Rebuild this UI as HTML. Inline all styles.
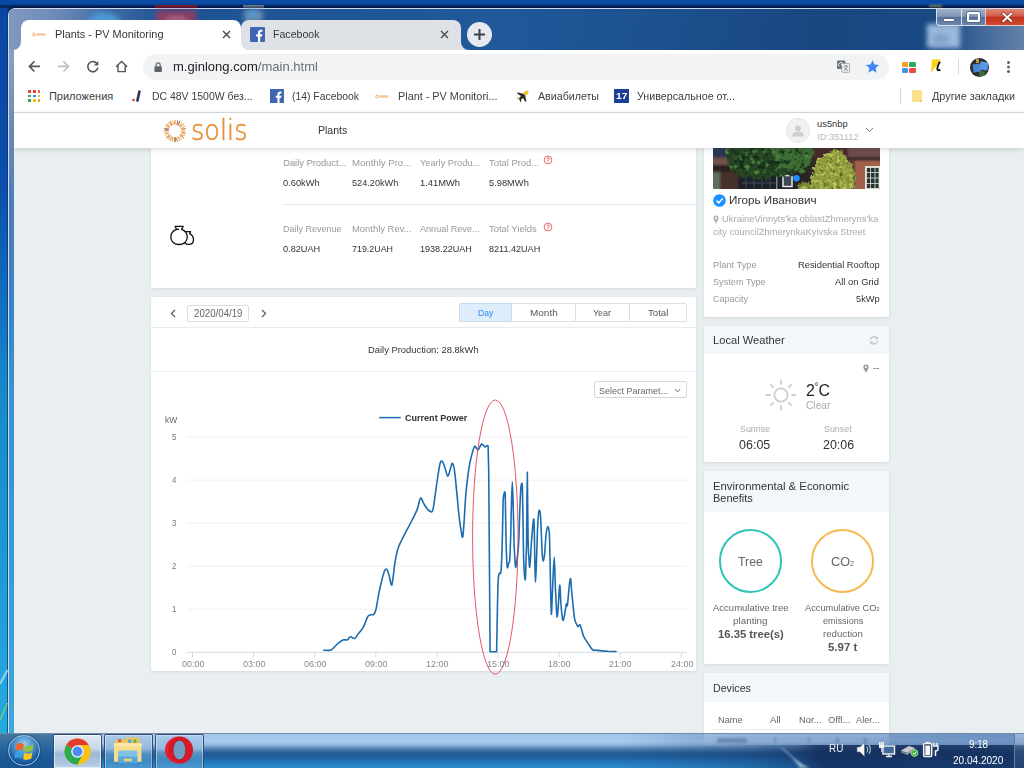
<!DOCTYPE html>
<html><head><meta charset="utf-8"><title>Plants - PV Monitoring</title>
<style>
*{box-sizing:border-box;margin:0;padding:0}
html,body{width:1024px;height:768px;overflow:hidden;background:#0b4aa2;font-family:"Liberation Sans",sans-serif}
.a{position:absolute}
.t{position:absolute;white-space:nowrap;line-height:1;transform-origin:0 0}
svg{position:absolute;overflow:visible}
#desk{left:0;top:0;width:1024px;height:768px;background:linear-gradient(180deg,#0a4ba6 0,#0a49a2 4px,#072f70 5.5px,#06295f 8px,#0a4ba6 9px)}
#deskL{left:0;top:8px;width:8.3px;height:725px;background:linear-gradient(180deg,#0a47a2 0,#0b4eac 175px,#1070c0 295px,#1688cc 375px,#1c9ad6 555px,#24aade 725px);border-right:1px solid rgba(16,50,100,.7)}
#win{left:8px;top:8px;width:1030px;height:730px;border-radius:7px 0 0 0;background:linear-gradient(100deg,#1d5190 0,#20589a 480px,#1d5291 620px,#184780 800px,#1a4a84 920px,#1c4f8c 1030px);border:1px solid #cfdcee;box-shadow:0 0 3px 1px rgba(0,10,40,.85)}
#glassL{left:9px;top:9px;width:160px;height:41px;background:linear-gradient(90deg,#8098c0 0,#6f8cb9 45px,#3f6aa3 100px,rgba(28,79,140,0) 160px);border-radius:6px 0 0 0}
#frameL{left:9px;top:50px;width:5px;height:683px;background:linear-gradient(180deg,#8a9fc2 0,#7690ba 60px,#4f7db8 150px,#3a84c6 260px,#3a92d0 340px,#3a9ad6 520px,#40a6de 683px)}
.blob{position:absolute;filter:blur(2.5px)}
.tab{position:absolute;top:20px;height:30px;border-radius:8px 8px 0 0}
#tab1{left:21px;width:220px;background:#fff}
#tab2{left:241px;width:220px;background:#dee1e6}
#newtab{left:467px;top:22px;width:25px;height:25px;border-radius:50%;background:#e6e9ee}
#chrome{left:14px;top:50px;width:1010px;height:63px;background:#fff}
#omni{left:143px;top:54px;width:746px;height:26px;border-radius:13px;background:#f1f3f4}
#bmline{left:14px;top:112px;width:1010px;height:1px;background:#dadce0}
#page{left:14px;top:113px;width:1010px;height:620px;background:#e9eef1;overflow:hidden}
.card{position:absolute;background:#fff;border-radius:2px;box-shadow:0 1px 3px rgba(100,115,125,.16)}
.chead{position:absolute;left:0;top:0;width:100%;background:#f4f7fa;border-radius:2px 2px 0 0}
.hl{position:absolute;height:1px;background:#e9ecef}
#hdr{left:0;top:0;width:1010px;height:35.2px;background:#fff;box-shadow:0 1px 5px rgba(60,70,70,.22)}
#task{left:0;top:733px;width:1024px;height:35px}
</style></head><body>

<div id="desk" class="a"></div>
<div class="a" style="left:155px;top:4.5px;width:41.5px;height:40px;background:#a3182e;filter:blur(.6px);opacity:.92"></div>
<div class="a" style="left:243px;top:5px;width:21px;height:40px;background:#8f9496;filter:blur(.6px);opacity:.85"></div>
<div class="a" style="left:929px;top:5px;width:13px;height:3px;background:#b9c27a;filter:blur(1px);opacity:.7"></div>
<div id="win" class="a"></div>
<div id="deskL" class="a"></div>
<svg style="left:0;top:660px" width="8" height="74" viewBox="0 0 8 74"><path d="M0 24 L7.500 10" stroke="#bfe4f4" stroke-width="2.200" opacity=".7"/><path d="M0 60 L7.500 43" stroke="#9fd85a" stroke-width="1.300" opacity=".8"/></svg>
<div id="glassL" class="a"></div><div id="frameL" class="a"></div>
<div class="blob" style="left:86px;top:12px;width:36px;height:30px;background:#4aa0dc;border-radius:50%;opacity:.85"></div>
<div class="blob" style="left:156px;top:10px;width:40px;height:40px;background:#a23a5a;opacity:.8"></div>
<div class="blob" style="left:166px;top:17px;width:21px;height:21px;border:3px solid #d78aa0;border-radius:6px;opacity:.8"></div>
<div class="blob" style="left:244px;top:10px;width:19px;height:12px;background:#6f8fb3;opacity:.9"></div><div class="blob" style="left:249px;top:10px;width:8px;height:8px;background:#4aa8e0;border-radius:50%;opacity:.8"></div>
<div class="a" style="left:940px;top:9px;width:90px;height:41px;background:linear-gradient(90deg,rgba(110,136,172,0) 0,rgba(110,136,172,.55) 50px,rgba(118,142,176,.85) 90px)"></div>
<div class="blob" style="left:927px;top:24px;width:33px;height:24px;background:#a9c5e6;opacity:.9"></div>
<div class="blob" style="left:933px;top:33px;width:16px;height:12px;background:#7d9cc4;opacity:.8;border-radius:50%"></div>
<!-- caption buttons -->
<div class="a" style="left:936px;top:9px;width:26px;height:17px;border:1px solid #d6e2f0;border-top:0;border-radius:0 0 0 4px;background:linear-gradient(180deg,#a1b1c9 0,#8296b3 46%,#58709a 52%,#6c86ad 100%)"></div>
<div class="a" style="left:961px;top:9px;width:25px;height:17px;border:1px solid #d6e2f0;border-top:0;background:linear-gradient(180deg,#a1b1c9 0,#8296b3 46%,#58709a 52%,#6c86ad 100%)"></div>
<div class="a" style="left:985px;top:9px;width:45px;height:17px;border:1px solid #e6c9c4;border-top:0;background:linear-gradient(180deg,#e08a7a 0,#d25a48 45%,#c0301c 50%,#cf4a30 100%)"></div>
<div class="a" style="left:943px;top:18px;width:12px;height:4px;background:#fff;border:1px solid #5a6b85;border-radius:1px"></div>
<div class="a" style="left:967px;top:12px;width:13px;height:10px;border:2.5px solid #fff;outline:1px solid #5a6b85;border-radius:1px"></div>
<svg style="left:1002.2px;top:12.8px" width="10.5" height="8.8" viewBox="0 0 12 10"><path d="M1.5 .8 L10.5 9.2 M10.5 .8 L1.5 9.2" stroke="#6a2a22" stroke-width="3.6" stroke-linecap="square"/><path d="M1.5 .8 L10.5 9.2 M10.5 .8 L1.5 9.2" stroke="#fff" stroke-width="2.2" stroke-linecap="square"/></svg>
<!-- tabs -->
<div id="tab2" class="tab"></div>
<div id="tab1" class="tab"></div>
<svg style="left:13px;top:42px" width="8" height="8"><path d="M0 8 A8 8 0 0 0 8 0 V8 Z" fill="#fff"/></svg>
<svg style="left:241px;top:42px" width="8" height="8"><path d="M8 8 A8 8 0 0 1 0 0 V8 Z" fill="#fff"/></svg>
<svg style="left:461px;top:42px" width="8" height="8"><path d="M8 8 A8 8 0 0 1 0 0 V8 Z" fill="#dee1e6"/></svg>
<div id="newtab" class="a"></div>
<svg style="left:473px;top:28px" width="13" height="13"><path d="M6.5 1 V12 M1 6.5 H12" stroke="#3c4043" stroke-width="2"/></svg>
<svg style="left:221.5px;top:30px" width="9" height="9"><path d="M1 1 L8 8 M8 1 L1 8" stroke="#45494d" stroke-width="1.4"/></svg>
<svg style="left:439.5px;top:30px" width="9" height="9"><path d="M1 1 L8 8 M8 1 L1 8" stroke="#45494d" stroke-width="1.4"/></svg>
<!-- tab favicons -->
<svg style="left:32px;top:32px" width="14" height="5" viewBox="0 0 14 5"><circle cx="2" cy="2.5" r="1.4" fill="none" stroke="#f0b070" stroke-width="1"/><rect x="4.5" y="1.3" width="9" height="2.4" rx="1" fill="#f5c99a"/></svg>
<div class="a" style="left:250px;top:27px;width:15px;height:15px;background:#4267b2;border-radius:1px"></div>
<svg style="left:250px;top:27px" width="15" height="15" viewBox="0 0 15 15"><path d="M10.2 15 V9.4 H12 L12.3 7.2 H10.2 V5.9 C10.2 5.2 10.4 4.8 11.3 4.8 H12.4 V2.9 C12.2 2.9 11.5 2.8 10.8 2.8 C9.1 2.8 8 3.8 8 5.6 V7.2 H6.2 V9.4 H8 V15 Z" fill="#fff"/></svg>
<div id="chrome" class="a"></div>
<div id="omni" class="a"></div>
<div id="bmline" class="a"></div>
<!-- toolbar icons -->
<svg style="left:27.6px;top:60.3px" width="12.8" height="12.8" viewBox="0 0 14 14"><path d="M13 7 H2 M7 1.5 L1.5 7 L7 12.5" fill="none" stroke="#50555a" stroke-width="1.7"/></svg>
<svg style="left:56.6px;top:60.3px" width="12.8" height="12.8" viewBox="0 0 14 14"><path d="M1 7 H12 M7 1.5 L12.5 7 L7 12.5" fill="none" stroke="#bbbfc4" stroke-width="1.7"/></svg>
<svg style="left:85.8px;top:60.2px" width="13.6" height="13.6" viewBox="0 0 15 15"><path d="M12.3 4.3 A5.6 5.6 0 1 0 13.1 8.5" fill="none" stroke="#50555a" stroke-width="1.7"/><path d="M13.6 1.2 V6.2 H8.6 Z" fill="#50555a"/></svg>
<svg style="left:114.9px;top:60.3px" width="13.2" height="13.2" viewBox="0 0 15 15"><path d="M1.2 7.6 L7.5 1.6 L13.8 7.6 M3.4 6.6 V13.2 H11.6 V6.6" fill="none" stroke="#50555a" stroke-width="1.6"/></svg>
<svg style="left:154.2px;top:62px" width="8.3" height="10" viewBox="0 0 10 12"><rect x="0.5" y="5" width="9" height="7" rx="1" fill="#5f6368"/><path d="M2.6 5 V3.4 A2.4 2.4 0 0 1 7.4 3.4 V5" fill="none" stroke="#5f6368" stroke-width="1.4"/></svg>
<!-- translate + star -->
<svg style="left:836.8px;top:60.4px" width="13" height="12.8" viewBox="0 0 15 15" preserveAspectRatio="none"><rect x="0" y="0.5" width="9.5" height="10" rx="1" fill="#6b7075"/><rect x="5.5" y="4" width="9" height="10.5" rx="1" fill="#eceef0" stroke="#8a8f94" stroke-width=".8"/><path d="M2.3 7.6 A2.4 2.4 0 1 1 6.6 4 M4.6 5.6 H7" stroke="#fff" stroke-width="1.1" fill="none"/><path d="M8 7 H12.5 M10.2 6 V7 M11.8 7 C11.4 9.6 9.6 11.6 8 12.2 M8.8 8.6 C9.6 10.4 11 11.8 12.6 12.4" stroke="#5f6368" stroke-width=".8" fill="none"/></svg>
<svg style="left:865px;top:58.8px" width="15" height="15" viewBox="0 0 24 24"><path d="M12 1.8 L15.1 8.6 L22.5 9.4 L17 14.4 L18.5 21.8 L12 18 L5.5 21.8 L7 14.4 L1.5 9.4 L8.9 8.6 Z" fill="#4285f4"/></svg>
<!-- extension icons -->
<div class="a" style="left:902px;top:61.8px;width:6.4px;height:5px;background:#f39c1f;border-radius:1.3px"></div>
<div class="a" style="left:909.4px;top:61.8px;width:6.4px;height:5px;background:#2eab5a;border-radius:1.3px"></div>
<div class="a" style="left:902px;top:67.8px;width:6.4px;height:5px;background:#3a97e0;border-radius:1.3px"></div>
<div class="a" style="left:909.4px;top:67.8px;width:6.4px;height:5px;background:#ea4c40;border-radius:1.3px"></div>
<svg style="left:929px;top:58px" width="14" height="16" viewBox="929 58 14 16"><path d="M931.8 59.6 L941 59.2 L936.5 66 L931 72.8 Z" fill="#fbd21e"/><path d="M939.9 61.6 C938.3 64.5 936.3 69.4 938 70 C938.8 70.3 939.6 70.2 940.4 69.8" fill="none" stroke="#111" stroke-width="1.9"/></svg>
<div class="a" style="left:958px;top:59px;width:1px;height:16px;background:#d5d8dc"></div>
<div class="a" style="left:970px;top:57.5px;width:19px;height:19px;border-radius:50%;background:#2b2f2a;overflow:hidden"><div class="a" style="left:3px;top:6px;width:8px;height:8px;background:#4a86d8;transform:rotate(-8deg)"></div><div class="a" style="left:10px;top:4px;width:8px;height:8px;background:#5a96e4;transform:rotate(10deg)"></div><div class="a" style="left:6px;top:1px;width:3px;height:4px;background:#b39a4a"></div><div class="a" style="left:9px;top:13px;width:6px;height:5px;background:#3d6a3a"></div></div>
<div class="a" style="left:1007px;top:61px;width:3px;height:3px;border-radius:50%;background:#5f6368;box-shadow:0 4.5px 0 #5f6368,0 9px 0 #5f6368"></div>
<div class="a" style="left:28.2px;top:90.0px;width:2.8px;height:2.8px;background:#e94235"></div><div class="a" style="left:32.9px;top:90.0px;width:2.8px;height:2.8px;background:#e94235"></div><div class="a" style="left:37.6px;top:90.0px;width:2.8px;height:2.8px;background:#ea5a3a"></div><div class="a" style="left:28.2px;top:94.7px;width:2.8px;height:2.8px;background:#34a853"></div><div class="a" style="left:32.9px;top:94.7px;width:2.8px;height:2.8px;background:#4285f4"></div><div class="a" style="left:37.6px;top:94.7px;width:2.8px;height:2.8px;background:#fbbc05"></div><div class="a" style="left:28.2px;top:99.4px;width:2.8px;height:2.8px;background:#34a853"></div><div class="a" style="left:32.9px;top:99.4px;width:2.8px;height:2.8px;background:#fbbc05"></div><div class="a" style="left:37.6px;top:99.4px;width:2.8px;height:2.8px;background:#f5a623"></div>
<svg style="left:131px;top:90px" width="10" height="12" viewBox="0 0 10 12"><circle cx="2.6" cy="10" r="1.3" fill="#e8283c"/><path d="M6.4 10.6 L8.4 1.6" stroke="#2b3a5c" stroke-width="2.6" stroke-linecap="round"/></svg>
<div class="a" style="left:270px;top:89px;width:14px;height:14px;background:#4267b2"></div>
<svg style="left:270px;top:89px" width="14" height="14" viewBox="0 0 15 15"><path d="M10.2 15 V9.4 H12 L12.3 7.2 H10.2 V5.9 C10.2 5.2 10.4 4.8 11.3 4.8 H12.4 V2.9 C12.2 2.9 11.5 2.8 10.8 2.8 C9.1 2.8 8 3.8 8 5.6 V7.2 H6.2 V9.4 H8 V15 Z" fill="#fff"/></svg>
<svg style="left:375px;top:94px" width="14" height="5" viewBox="0 0 14 5"><circle cx="2" cy="2.5" r="1.4" fill="none" stroke="#f0b070" stroke-width="1"/><rect x="4.5" y="1.3" width="9" height="2.4" rx="1" fill="#f5c99a"/></svg>
<svg style="left:516px;top:90px" width="13" height="13" viewBox="0 0 13 13"><path d="M12 1 C11 .4 10 .9 9.2 1.7 L7.2 3.8 L2 2.6 L1 3.6 L5 6 L3.2 8 L1.4 7.8 L.8 8.5 L3.4 9.6 L4.5 12.2 L5.2 11.6 L5 9.8 L7 8 L9.4 12 L10.4 11 L9.2 5.8 L11.3 3.8 C12.1 3 12.6 2 12 1 Z" fill="#2a2a2a"/><path d="M12 1 C11 .4 10 .9 9.2 1.7 L7.2 3.8 L9.2 5.8 L11.3 3.8 C12.1 3 12.6 2 12 1 Z M3.2 8 L1.4 7.8 L.8 8.5 L3.4 9.6 Z" fill="#f6cf1e"/></svg>
<div class="a" style="left:614px;top:89px;width:15px;height:14px;background:#1c3f94"></div>
<div class="a" style="left:900px;top:88px;width:1px;height:16px;background:#d5d8dc"></div>
<div class="a" style="left:911.6px;top:89.6px;width:10.9px;height:12.7px;background:#fbe18f;border-radius:1px"></div><div class="a" style="left:920.3px;top:99.8px;width:2.2px;height:2.5px;background:#efc65e"></div>

<div id="page" class="a"></div>
<!-- left card 1 (stats) -->
<div class="card" style="left:151.4px;top:140px;width:544.3px;height:148px"></div>
<div class="hl" style="left:283px;top:204px;width:412.7px"></div>
<svg style="left:168px;top:224px" width="28" height="23" viewBox="168 224 28 23"><g fill="#fff" stroke="#111" stroke-width="1.3" stroke-linejoin="round"><path d="M184.8 231.6 H190.6 L189.6 233.6 C192.3 235 193.5 237.2 193.5 239.4 C193.5 242.6 191.4 244.4 188.8 244.4 C186 244.4 184 242.8 184 240 Z"/><path d="M175.2 226.4 H183.2 L181.6 229.4 C185 230.6 187.3 233.4 187.3 237 C187.3 241.6 183.6 244.5 179 244.5 C174.4 244.5 170.8 241.6 170.8 237 C170.8 233.4 173.2 230.6 176.6 229.4 Z"/><path d="M176.6 229.4 H179" fill="none"/></g></svg>
<svg style="left:542.5px;top:155.2px" width="10" height="10" viewBox="0 0 10 10"><circle cx="5" cy="5" r="3.9" fill="#fff" stroke="#e8595a" stroke-width=".9"/><path d="M3.8 4.1 A1.25 1.25 0 1 1 5 5.3 V6" fill="none" stroke="#e8595a" stroke-width=".8"/><circle cx="5" cy="7.1" r=".5" fill="#e8595a"/></svg><svg style="left:542.5px;top:222.0px" width="10" height="10" viewBox="0 0 10 10"><circle cx="5" cy="5" r="3.9" fill="#fff" stroke="#e8595a" stroke-width=".9"/><path d="M3.8 4.1 A1.25 1.25 0 1 1 5 5.3 V6" fill="none" stroke="#e8595a" stroke-width=".8"/><circle cx="5" cy="7.1" r=".5" fill="#e8595a"/></svg>
<!-- left card 2 (chart) -->
<div class="card" style="left:151.4px;top:297px;width:544.3px;height:373.7px"></div>
<div class="hl" style="left:151.4px;top:327px;width:544.3px"></div>
<div class="hl" style="left:151.4px;top:371px;width:544.3px;background:#eef0f2"></div>
<svg style="left:169px;top:308px" width="8" height="11" viewBox="0 0 8 11"><path d="M6 2 L2.400 5.500 L6 9" fill="none" stroke="#555" stroke-width="1.100"/></svg>
<svg style="left:259.5px;top:308px" width="8" height="11" viewBox="0 0 8 11"><path d="M2 2 L5.600 5.500 L2 9" fill="none" stroke="#555" stroke-width="1.100"/></svg>
<div class="a" style="left:187.4px;top:304.5px;width:61.2px;height:17px;border:1px solid #dcdee2;border-radius:2px;background:#fff"></div>
<div class="a" style="left:459px;top:302.6px;width:227.6px;height:19px;border:1px solid #dcdee2;border-radius:2px;background:#fff"></div>
<div class="a" style="left:459px;top:302.6px;width:52.5px;height:19px;border:1px solid #c5dcf3;border-radius:2px 0 0 2px;background:#ddedfb"></div>
<div class="a" style="left:575.3px;top:302.6px;width:1px;height:19px;background:#dcdee2"></div>
<div class="a" style="left:629.2px;top:302.6px;width:1px;height:19px;background:#dcdee2"></div>
<div class="a" style="left:593.6px;top:381.3px;width:93px;height:17.2px;border:1px solid #d4d7dc;border-radius:2px;background:#fff"></div>
<svg style="left:673.6px;top:387.6px" width="7" height="5.5" viewBox="0 0 9 7"><path d="M1 1.3 L4.5 5 L8 1.3" fill="none" stroke="#666" stroke-width="1.2"/></svg>
<svg style="left:0;top:0" width="1024" height="768" viewBox="0 0 1024 768"><path d="M187 437.0 H687" stroke="#eef0f2" stroke-width="1"/><path d="M187 480.1 H687" stroke="#eef0f2" stroke-width="1"/><path d="M187 523.2 H687" stroke="#eef0f2" stroke-width="1"/><path d="M187 566.2 H687" stroke="#eef0f2" stroke-width="1"/><path d="M187 609.2 H687" stroke="#eef0f2" stroke-width="1"/><path d="M187 652.3 H687" stroke="#d5d9de" stroke-width="1"/><path d="M192.5 652.3 V657.3" stroke="#d5d9de" stroke-width="1"/><path d="M253.6 652.3 V657.3" stroke="#d5d9de" stroke-width="1"/><path d="M314.7 652.3 V657.3" stroke="#d5d9de" stroke-width="1"/><path d="M375.8 652.3 V657.3" stroke="#d5d9de" stroke-width="1"/><path d="M436.9 652.3 V657.3" stroke="#d5d9de" stroke-width="1"/><path d="M498.0 652.3 V657.3" stroke="#d5d9de" stroke-width="1"/><path d="M559.1 652.3 V657.3" stroke="#d5d9de" stroke-width="1"/><path d="M620.2 652.3 V657.3" stroke="#d5d9de" stroke-width="1"/><path d="M681.3 652.3 V657.3" stroke="#d5d9de" stroke-width="1"/><path d="M379.2 417.6 H400.7" stroke="#1d6cb0" stroke-width="1.5"/><path d="M323.7 650.2 C324.8 650.2 328.7 650.7 330.4 650.2 C332.1 649.8 332.9 648.5 334.0 647.5 C335.1 646.5 336.2 645.0 337.3 644.0 C338.4 643.0 339.4 642.2 340.5 641.5 C341.6 640.8 342.6 640.1 343.7 639.8 C344.8 639.5 346.3 640.3 347.4 639.8 C348.5 639.3 349.3 636.9 350.5 636.7 C351.7 636.5 353.3 639.1 354.7 638.5 C356.1 637.9 357.5 634.8 358.9 633.0 C360.3 631.2 361.8 629.7 362.9 627.9 C364.0 626.1 364.6 624.0 365.5 622.0 C366.4 620.0 367.1 617.4 368.0 616.2 C368.9 615.0 370.0 615.1 371.0 614.8 C372.0 614.5 373.0 615.3 373.8 614.4 C374.6 613.5 375.1 613.2 376.0 609.3 C376.9 605.4 378.0 597.2 379.3 591.1 C380.6 585.0 382.6 576.5 383.8 572.9 C385.0 569.2 385.7 568.9 386.6 569.2 C387.5 569.6 388.2 572.4 389.0 575.0 C389.8 577.6 390.8 584.6 391.5 585.1 C392.2 585.6 392.4 581.6 393.0 578.0 C393.6 574.4 394.1 568.4 394.8 563.7 C395.6 559.1 396.4 554.1 397.5 550.1 C398.6 546.1 399.3 545.0 401.7 540.0 C404.1 535.0 409.5 525.1 412.1 520.0 C414.7 514.9 415.9 512.8 417.3 509.1 C418.7 505.5 419.4 499.0 420.5 498.1 C421.6 497.2 422.8 502.2 424.0 504.0 C425.2 505.8 426.1 507.9 427.5 509.1 C428.9 510.3 431.0 512.9 432.2 511.4 C433.4 509.9 433.7 504.8 434.5 500.0 C435.3 495.2 436.0 488.5 436.9 482.5 C437.8 476.5 439.1 467.3 440.0 463.8 C440.9 460.3 441.5 460.7 442.3 461.4 C443.1 462.1 444.1 465.5 445.0 468.0 C445.9 470.5 446.9 476.1 447.8 476.3 C448.7 476.5 449.5 471.1 450.3 469.0 C451.1 466.9 451.8 462.7 452.5 463.4 C453.2 464.1 453.8 464.7 454.8 473.1 C455.9 481.5 457.8 504.3 458.8 513.8 C459.8 523.3 460.4 526.1 461.0 530.0 C461.6 533.9 462.2 538.6 462.7 536.9 C463.2 535.2 463.7 527.0 464.2 520.0 C464.7 513.0 465.0 503.6 465.8 495.0 C466.6 486.4 467.9 474.9 468.9 468.4 C469.8 461.9 470.6 459.6 471.5 456.0 C472.4 452.4 473.6 447.9 474.4 446.6 C475.2 445.3 475.6 447.5 476.3 448.0 C477.0 448.5 477.5 450.3 478.3 449.7 C479.1 449.1 480.6 444.9 481.4 444.2 C482.2 443.5 482.6 445.1 483.3 445.5 C484.0 445.9 484.7 446.9 485.3 446.9 C485.9 446.9 486.5 445.8 487.0 445.6 C487.5 445.4 487.9 445.8 488.1 445.8 L488.7 470 L489.4 560 L490.1 651.7 L496.6 651.7 C496.8 643.1 497.3 612.4 497.6 600.0 C497.9 587.6 498.0 582.0 498.4 577.5 C498.8 573.0 499.2 574.2 499.7 573.0 C500.1 571.8 500.7 576.0 501.1 570.5 C501.5 565.0 502.0 551.3 502.3 540.0 C502.6 528.7 502.9 510.0 503.1 502.5 C503.4 495.0 503.6 496.5 503.8 494.8 C504.0 493.1 504.3 492.3 504.5 492.3 C504.7 492.3 505.0 490.2 505.2 494.8 C505.4 499.4 505.5 510.8 505.7 520.0 C505.9 529.2 506.0 542.1 506.3 550.0 C506.6 557.9 506.9 565.1 507.3 567.3 C507.7 569.5 508.4 564.2 508.8 563.0 C509.2 561.8 509.4 564.1 509.7 560.3 C510.0 556.5 510.3 548.4 510.6 540.0 C510.9 531.6 511.0 519.7 511.3 510.0 C511.6 500.3 512.0 481.9 512.3 481.9 C512.6 481.9 513.0 500.3 513.3 510.0 C513.6 519.7 513.8 532.0 514.0 540.0 C514.2 548.0 514.5 553.5 514.8 558.0 C515.1 562.5 515.3 566.6 515.6 567.3 C515.9 568.0 516.3 564.0 516.6 562.0 C516.9 560.0 517.1 559.3 517.5 555.6 C517.9 551.9 518.4 548.4 518.8 540.0 C519.2 531.6 519.6 513.8 520.0 505.0 C520.4 496.2 520.6 491.0 520.9 487.5 C521.2 484.0 521.5 483.8 521.7 483.8 C522.0 483.8 522.2 481.5 522.4 487.5 C522.6 493.5 522.8 507.4 523.0 520.0 C523.2 532.6 523.4 553.4 523.8 563.4 C524.2 573.4 524.9 580.4 525.3 579.8 C525.7 579.2 525.8 566.6 526.0 560.0 C526.2 553.4 526.4 554.7 526.6 540.0 C526.8 525.3 527.0 472.0 527.3 472.0 C527.5 472.0 527.8 525.7 528.1 540.0 C528.4 554.3 528.6 553.5 528.9 558.0 C529.2 562.5 529.4 567.8 529.7 567.3 C530.0 566.8 530.4 559.5 530.7 555.0 C531.0 550.5 531.1 545.9 531.6 540.0 C532.1 534.1 533.4 516.1 533.9 519.4 C534.4 522.7 534.5 549.5 534.8 560.0 C535.1 570.5 535.2 582.2 535.5 582.2 C535.8 582.2 536.2 568.7 536.5 560.0 C536.8 551.3 537.2 537.8 537.5 530.0 C537.8 522.2 538.2 516.8 538.5 513.5 C538.8 510.2 539.1 510.3 539.4 510.3 C539.7 510.3 540.0 510.2 540.3 513.5 C540.6 516.8 540.9 523.1 541.2 530.0 C541.5 536.9 541.9 549.8 542.3 555.0 C542.6 560.2 542.9 561.1 543.3 561.1 C543.7 561.1 544.0 559.4 544.5 555.0 C545.0 550.6 545.6 539.3 546.0 535.0 C546.4 530.7 546.7 530.4 547.0 529.0 C547.3 527.6 547.7 526.6 548.0 526.7 C548.3 526.8 548.6 527.3 548.9 529.5 C549.2 531.7 549.3 530.8 549.6 540.0 C549.9 549.2 550.2 572.6 550.5 585.0 C550.8 597.4 551.1 613.4 551.4 614.2 C551.7 615.0 552.0 599.5 552.5 590.0 C553.0 580.5 553.7 557.2 554.2 557.2 C554.7 557.2 555.0 580.2 555.5 590.0 C556.0 599.8 556.5 612.5 556.9 615.8 C557.3 619.1 557.5 615.1 558.0 610.0 C558.5 604.9 559.2 586.1 559.7 585.3 C560.2 584.5 560.5 599.2 561.0 605.0 C561.5 610.8 562.2 618.3 562.8 620.0 C563.4 621.7 563.9 617.6 564.5 615.0 C565.1 612.4 565.8 605.9 566.3 604.1 C566.8 602.4 566.9 608.7 567.5 604.5 C568.1 600.3 569.5 580.4 570.2 578.8 C571.0 577.2 571.3 588.5 572.0 595.0 C572.7 601.5 573.8 613.3 574.5 618.1 C575.2 622.9 575.9 622.6 576.5 624.0 C577.1 625.4 577.5 626.6 578.1 626.7 C578.7 626.8 579.4 624.1 580.0 624.8 C580.6 625.5 581.4 629.0 582.0 631.0 C582.6 633.0 582.9 634.9 583.9 636.9 C584.9 638.9 586.4 641.0 587.8 643.1 C589.2 645.2 591.1 648.5 592.5 649.7 C593.9 650.9 594.8 650.1 596.0 650.3 C597.2 650.4 598.0 650.4 600.0 650.6 C602.0 650.8 605.3 651.1 608.0 651.3 C610.7 651.4 614.7 651.5 616.0 651.5" fill="none" stroke="#1d6cb0" stroke-width="1.6" stroke-linejoin="round" stroke-linecap="round"/><ellipse cx="495.3" cy="537.1" rx="22.7" ry="137.1" fill="none" stroke="#e0434f" stroke-width=".9"/></svg>
<div class="card" style="left:704.2px;top:140px;width:184.4px;height:176.7px"></div>
<svg style="left:713px;top:140px" width="167" height="49" viewBox="713 140 167 49">
<defs><clipPath id="pc"><path d="M713 140 H880 V187 A2 2 0 0 1 878 189 H715 A2 2 0 0 1 713 187 Z"/></clipPath><filter id="b1"><feGaussianBlur stdDeviation="1.1"/></filter><filter id="b2"><feGaussianBlur stdDeviation=".5"/></filter>
<filter id="lf1" x="-8%" y="-8%" width="116%" height="116%"><feTurbulence type="fractalNoise" baseFrequency=".2" numOctaves="2" seed="7" result="n"/><feDisplacementMap in="SourceGraphic" in2="n" scale="7" xChannelSelector="R" yChannelSelector="G" result="sh"/><feColorMatrix in="n" type="matrix" values="0 0 0 0 0 0 0 0 0 0 0 0 0 0 0 4 0 0 0 -2.25" result="a"/><feFlood flood-color="#528a40"/><feComposite in2="a" operator="in"/><feComposite in2="sh" operator="in" result="sp"/><feColorMatrix in="n" type="matrix" values="0 0 0 0 0 0 0 0 0 0 0 0 0 0 0 0 4 0 0 -1.9" result="a2"/><feFlood flood-color="#162a1a"/><feComposite in2="a2" operator="in"/><feComposite in2="sh" operator="in" result="dk"/><feMerge><feMergeNode in="sh"/><feMergeNode in="dk"/><feMergeNode in="sp"/></feMerge><feGaussianBlur stdDeviation=".7"/></filter>
<filter id="lf2" x="-8%" y="-8%" width="116%" height="116%"><feTurbulence type="fractalNoise" baseFrequency=".3" numOctaves="2" seed="11" result="n"/><feDisplacementMap in="SourceGraphic" in2="n" scale="7" xChannelSelector="R" yChannelSelector="G" result="sh"/><feColorMatrix in="n" type="matrix" values="0 0 0 0 0 0 0 0 0 0 0 0 0 0 0 4 0 0 0 -2" result="a"/><feFlood flood-color="#c2c862"/><feComposite in2="a" operator="in"/><feComposite in2="sh" operator="in" result="sp"/><feColorMatrix in="n" type="matrix" values="0 0 0 0 0 0 0 0 0 0 0 0 0 0 0 0 4 0 0 -2.05" result="a2"/><feFlood flood-color="#55642a"/><feComposite in2="a2" operator="in"/><feComposite in2="sh" operator="in" result="dk"/><feMerge><feMergeNode in="sh"/><feMergeNode in="dk"/><feMergeNode in="sp"/></feMerge><feGaussianBlur stdDeviation=".6"/></filter></defs>
<g clip-path="url(#pc)"><rect x="713" y="140" width="167" height="49" fill="#35282a"/>
<g filter="url(#b1)">
<rect x="712" y="146" width="16" height="11.5" fill="#2b3654"/><rect x="712" y="157.5" width="17" height="7.5" fill="#6f5248"/><rect x="712" y="165" width="30" height="7" fill="#2a2222"/><rect x="712" y="172" width="8" height="19" fill="#5f6e5e"/><rect x="720" y="172" width="24" height="18" fill="#46302c"/>
<rect x="810" y="146" width="44" height="12" fill="#4a2c2a"/>
<rect x="848" y="146" width="34" height="11" fill="#6c4e48"/><rect x="848" y="157" width="34" height="3.5" fill="#33262a"/><rect x="854" y="160.5" width="28" height="30" fill="#a2604c"/><rect x="846" y="160" width="9" height="30" fill="#5a3a32"/>
<rect x="738" y="175" width="56" height="15" fill="#1c222b"/><rect x="792" y="172" width="22" height="18" fill="#2a2426"/>
</g>
<g filter="url(#b2)"><path d="M746 178 V189 M754 178 V189 M762 178 V189 M770 178 V189 M742 183 H776" stroke="#4a5664" stroke-width=".8"/><rect x="776" y="176" width="1.5" height="13" fill="#7a848c"/><rect x="783" y="175.5" width="9" height="11" fill="#3a4654" stroke="#e3e9ee" stroke-width="1.5"/>
<rect x="866" y="167" width="13.5" height="22" fill="#27332f" stroke="#eef2ee" stroke-width="1.7"/><path d="M870.5 167 V189 M875 167 V189 M866 172.5 H880 M866 178 H880 M866 183.5 H880" stroke="#dfe6df" stroke-width=".8"/></g>
<g filter="url(#lf1)"><path d="M727 147 H813 C814 154 813 162 810 168 C806 174 798 172 792 175 C784 178 776 175 768 178 C758 181 746 178 738 175 C731 171 727 164 727 156 Z" fill="#274428"/><path d="M772 147 H813 C814 154 813 162 809 167 C800 172 788 170 780 166 C773 160 771 153 772 147 Z" fill="#3c6c34"/></g>
<g filter="url(#lf2)"><path d="M838 150 C843 152 848 158 852 166 C856 174 856 182 854 190 H806 C810 184 812 178 813 170 C815 162 820 157 826 155 C830 153 834 148 838 150 Z" fill="#8f9c3a"/><path d="M796 190 C798 184 802 181 806 182 C809 183 811 186 812 190 Z" fill="#6f8c3a"/></g>
<circle cx="796.5" cy="178.3" r="3.2" fill="#1890ff"/></g></svg>
<svg style="left:713px;top:193.5px" width="13" height="13" viewBox="0 0 13 13"><circle cx="6.5" cy="6.5" r="6.3" fill="#1890ff"/><path d="M3.5 6.6 L5.7 8.8 L9.6 4.6" fill="none" stroke="#fff" stroke-width="1.5"/></svg>
<svg style="left:713px;top:214.5px" width="6" height="9" viewBox="0 0 6 9"><path d="M3 .4 C1.3 .4 .3 1.6 .3 3 C.3 4.8 3 8.6 3 8.6 C3 8.6 5.7 4.8 5.7 3 C5.7 1.6 4.7 .4 3 .4 Z" fill="#b4b4b4"/><circle cx="3" cy="3" r="1" fill="#fff"/></svg>
<!-- weather -->
<div class="card" style="left:704.2px;top:325.5px;width:184.4px;height:136.5px"><div class="chead" style="height:28.7px"></div></div>
<svg style="left:868.6px;top:336.4px" width="10" height="8.8" viewBox="0 0 11 10"><path d="M1.3 4.3 A4 3.7 0 0 1 8.6 2.6 M9.7 5.7 A4 3.7 0 0 1 2.4 7.4" fill="none" stroke="#c6c6c6" stroke-width="1.7"/><path d="M10.2 .2 V3.8 H6.6 Z M.8 9.8 V6.2 H4.4 Z" fill="#c6c6c6"/></svg>
<svg style="left:862.8px;top:364.3px" width="6" height="9" viewBox="0 0 6 9"><path d="M3 .4 C1.3 .4 .3 1.6 .3 3 C.3 4.8 3 8.6 3 8.6 C3 8.6 5.7 4.8 5.7 3 C5.7 1.6 4.7 .4 3 .4 Z" fill="#9a9a9a"/><circle cx="3" cy="3" r="1" fill="#fff"/></svg>
<svg style="left:764.5px;top:379.4px" width="32" height="32" viewBox="-16 -16 32 32"><circle r="6.6" fill="none" stroke="#cfcfcf" stroke-width="1.9"/><g stroke="#cfcfcf" stroke-width="1.9" stroke-linecap="round"><path d="M0 -11 V-14.5 M0 11 V14.5 M-11 0 H-14.5 M11 0 H14.5 M7.8 -7.8 L10 -10 M-7.8 -7.8 L-10 -10 M7.8 7.8 L10 10 M-7.8 7.8 L-10 10"/></g></svg>
<!-- env -->
<div class="card" style="left:704.2px;top:471.1px;width:184.4px;height:192.7px"><div class="chead" style="height:41.2px"></div></div>
<div class="a" style="left:718.7px;top:529.3px;width:63.4px;height:63.4px;border-radius:50%;border:2.3px solid #2ec5b6"></div>
<div class="a" style="left:810.9px;top:529.3px;width:63.4px;height:63.4px;border-radius:50%;border:2.3px solid #f6ba55"></div>
<!-- devices -->
<div class="card" style="left:704.2px;top:673px;width:184.4px;height:80px"><div class="chead" style="height:28.7px"></div></div>
<div class="hl" style="left:713px;top:728.5px;width:167px"></div>
<!-- page header -->
<div class="a" id="hdr" style="left:14px;top:113px"></div>
<svg style="left:162.0px;top:118.1px" width="26" height="26" viewBox="-13 -13 26 26"><path d="M11.2 0.0 L6.3 0.8 L10.9 2.5 L5.9 2.1" fill="none" stroke="#ec9a44" stroke-width=".85" stroke-linejoin="round"/><path d="M10.1 4.9 L5.3 3.4 L8.8 7.0 L4.4 4.5" fill="none" stroke="#d08a46" stroke-width=".85" stroke-linejoin="round"/><path d="M7.0 8.8 L3.3 5.4 L4.9 10.1 L2.0 6.0" fill="none" stroke="#f2a652" stroke-width=".85" stroke-linejoin="round"/><path d="M2.5 10.9 L0.7 6.3 L0.0 11.2 L-0.8 6.3" fill="none" stroke="#9a6a48" stroke-width=".85" stroke-linejoin="round"/><path d="M-2.5 10.9 L-2.1 5.9 L-4.9 10.1 L-3.4 5.3" fill="none" stroke="#ec9a44" stroke-width=".85" stroke-linejoin="round"/><path d="M-7.0 8.8 L-4.5 4.4 L-8.8 7.0 L-5.4 3.3" fill="none" stroke="#d08a46" stroke-width=".85" stroke-linejoin="round"/><path d="M-10.1 4.9 L-6.0 2.0 L-10.9 2.5 L-6.3 0.7" fill="none" stroke="#f2a652" stroke-width=".85" stroke-linejoin="round"/><path d="M-11.2 0.0 L-6.3 -0.8 L-10.9 -2.5 L-5.9 -2.1" fill="none" stroke="#9a6a48" stroke-width=".85" stroke-linejoin="round"/><path d="M-10.1 -4.9 L-5.3 -3.4 L-8.8 -7.0 L-4.4 -4.5" fill="none" stroke="#ec9a44" stroke-width=".85" stroke-linejoin="round"/><path d="M-7.0 -8.8 L-3.3 -5.4 L-4.9 -10.1 L-2.0 -6.0" fill="none" stroke="#d08a46" stroke-width=".85" stroke-linejoin="round"/><path d="M-2.5 -10.9 L-0.7 -6.3 L-0.0 -11.2 L0.8 -6.3" fill="none" stroke="#f2a652" stroke-width=".85" stroke-linejoin="round"/><path d="M2.5 -10.9 L2.1 -5.9 L4.9 -10.1 L3.4 -5.3" fill="none" stroke="#9a6a48" stroke-width=".85" stroke-linejoin="round"/><path d="M7.0 -8.8 L4.5 -4.4 L8.8 -7.0 L5.4 -3.3" fill="none" stroke="#ec9a44" stroke-width=".85" stroke-linejoin="round"/><path d="M10.1 -4.9 L6.0 -2.0 L10.9 -2.5 L6.3 -0.7" fill="none" stroke="#d08a46" stroke-width=".85" stroke-linejoin="round"/></svg>
<div class="a" style="left:785.8px;top:118.3px;width:24.4px;height:24.4px;border-radius:50%;background:#f1f1f1;border:1px solid #e6e6e6"></div>
<svg style="left:791px;top:123.5px" width="14" height="14" viewBox="0 0 14 14"><circle cx="7" cy="4.6" r="3" fill="#cfcfcf"/><path d="M1.2 12.6 V11 C1.2 9.2 3.6 8 5 7.8 H9 C10.4 8 12.8 9.2 12.8 11 V12.6 Z" fill="#cfcfcf"/></svg>
<svg style="left:865px;top:127px" width="9" height="6" viewBox="0 0 9 6"><path d="M1 1 L4.5 4.6 L8 1" fill="none" stroke="#777" stroke-width="1"/></svg>

<div id="task" class="a" style="background:linear-gradient(180deg,#55718c 0,#a4c6ea 1.5px,#a9cbee 9px,#8fb6de 12px,#4f80b2 16px,#235c93 20px,#1f5f9c 24px,#2478bc 29px,#2b8bcf 35px)"></div>
<div class="a" style="left:0;top:734px;width:56px;height:34px;background:linear-gradient(180deg,#47789f 0,#2f6aa0 10px,#1d5a98 22px,#1a5696 34px)"></div>
<div class="a" style="left:620px;top:745px;width:404px;height:23px;background:linear-gradient(90deg,rgba(22,52,100,0) 0,rgba(22,52,100,.3) 120px,rgba(20,46,94,.55) 175px,rgba(18,42,88,.86) 200px,rgba(20,45,90,.86) 404px)"></div>
<div class="a" style="left:620px;top:734px;width:404px;height:11px;background:linear-gradient(90deg,rgba(50,90,150,0) 0,rgba(50,90,150,.35) 120px,rgba(52,92,150,.5) 404px)"></div>
<div class="a" style="left:704.200px;top:734px;width:184.400px;height:11px;background:linear-gradient(180deg,rgba(235,242,250,.22),rgba(235,242,250,.06))"></div>
<div class="a" style="left:717px;top:737.500px;width:30px;height:5px;background:#2a4a78;opacity:.35;filter:blur(1.2px)"></div>
<div class="a" style="left:774px;top:737.500px;width:2px;height:5px;background:#2a4a78;opacity:.35;filter:blur(1px)"></div>
<div class="a" style="left:808px;top:737.500px;width:2px;height:5px;background:#2a4a78;opacity:.35;filter:blur(1px)"></div>
<div class="a" style="left:836px;top:737.500px;width:3px;height:5px;background:#2a4a78;opacity:.3;filter:blur(1px)"></div>
<div class="a" style="left:864px;top:737.500px;width:3px;height:5px;background:#2a4a78;opacity:.3;filter:blur(1px)"></div>
<svg style="left:770px;top:740px" width="50" height="28" viewBox="0 0 50 28"><path d="M8 6 C14 8 18 12 24 18 C30 22 34 26 40 28 H30 C26 22 20 14 8 6 Z" fill="#b8cfe6" opacity=".75" filter="url(#b1)"/></svg>
<div class="a" style="left:52.5px;top:733.5px;width:49.0px;height:34px;border:1px solid #2f4f74;border-bottom:0;border-radius:2px 2px 0 0;background:linear-gradient(180deg,#dfe9f4 0,#c6d6e8 42%,#9db8d6 56%,#a9c3de 78%,#b9d0e8 100%);box-shadow:inset 0 0 0 1px rgba(255,255,255,.6)"></div><div class="a" style="left:103.5px;top:733.5px;width:49.0px;height:34px;border:1px solid #2f4f74;border-bottom:0;border-radius:2px 2px 0 0;background:linear-gradient(180deg,#aacbeb 0,#94badf 40%,#5590c0 56%,#3f88c2 78%,#4a98d0 100%);box-shadow:inset 1px 0 0 rgba(255,255,255,.45),inset -1px 0 0 rgba(255,255,255,.35),inset 0 1px 0 rgba(255,255,255,.35)"></div><div class="a" style="left:154.5px;top:733.5px;width:49.0px;height:34px;border:1px solid #2f4f74;border-bottom:0;border-radius:2px 2px 0 0;background:linear-gradient(180deg,#aacbeb 0,#94badf 40%,#5590c0 56%,#3f88c2 78%,#4a98d0 100%);box-shadow:inset 1px 0 0 rgba(255,255,255,.45),inset -1px 0 0 rgba(255,255,255,.35),inset 0 1px 0 rgba(255,255,255,.35)"></div>
<!-- start orb -->
<div class="a" style="left:8px;top:734.5px;width:31.5px;height:31.5px;border-radius:50%;background:radial-gradient(circle at 50% 30%,#9fd0ee 0,#4f97cf 35%,#1f5fa6 65%,#123f7a 100%);border:1.5px solid #9cc3e4;box-shadow:0 0 2px #0a2a55"></div>
<svg style="left:14.5px;top:739.3px" width="20" height="24.5" viewBox="0 0 21 20" preserveAspectRatio="none"><path d="M1.5 4.5 C4 3 6.5 3 9.3 4.3 L8.3 9.3 C5.8 8.2 3.3 8.2 .6 9.7 Z" fill="#f2642c"/><path d="M10.8 4.8 C13.5 6 16 6 19.5 4.2 L18.5 9.3 C15.5 10.8 12.8 10.8 9.8 9.8 Z" fill="#8cc63e"/><path d="M.3 11.2 C3 9.8 5.5 9.8 8 10.8 L7 15.8 C4.5 14.8 2 14.8 -.6 16.2 Z" fill="#3aa0e6"/><path d="M9.5 11.3 C12.5 12.4 15.2 12.3 18.2 10.8 L17.2 15.8 C14.2 17.3 11.5 17.3 8.5 16.3 Z" fill="#fbc81e"/></svg>
<!-- chrome icon -->
<svg style="left:63.5px;top:737.5px" width="27" height="27" viewBox="-13.5 -13.5 27 27"><circle r="13" fill="#fbc116"/><path d="M0 0 L-11.26 -6.5 A13 13 0 0 1 11.26 -6.5 Z" fill="#e33b2e"/><path d="M0 0 L-11.26 -6.5 A13 13 0 0 0 0 13 L5.5 3 Z" fill="#2da94f"/><path d="M11.26 -6.5 H0 L5.5 3 L0 13 A13 13 0 0 0 11.26 -6.5 Z" fill="#fbc116"/><circle r="6.2" fill="#f3f6fa"/><circle r="4.9" fill="#4c8bf5"/></svg>
<!-- explorer icon -->
<svg style="left:113px;top:736.3px" width="30.5" height="27.8" viewBox="0 0 30 27" preserveAspectRatio="none"><path d="M2 4 H11 L13 1.5 H26 V8 H2 Z" fill="#e9c45e"/><rect x="5" y="3" width="3" height="3" fill="#e85a3a"/><rect x="15" y="3.5" width="3" height="3" fill="#4aa0e0"/><rect x="20" y="3.5" width="3" height="3" fill="#5ab04a"/><path d="M1 7 H28 V25 H1 Z" fill="#f6dc8c"/><path d="M1 7 H28 V10 H1 Z" fill="#fbe9a8"/><path d="M5 16 C5 14.5 6 14 7 14 H22 C23 14 24 14.5 24 16 V26 H5 Z" fill="#7fc0e6"/><path d="M5 20 H24 V26 H5 Z" fill="#5aa6d8"/><rect x="10.5" y="22" width="8" height="2.5" fill="#f2d26a"/></svg>
<!-- opera icon -->
<svg style="left:165.2px;top:736.1px" width="28" height="28" viewBox="-14 -14 28 28"><ellipse rx="14" ry="13.6" fill="#e8212e"/><ellipse cx="1.5" rx="12.5" ry="13.6" fill="#c4101e" opacity=".45"/><ellipse cx=".4" rx="6.3" ry="9.8" fill="#6f9fc8"/><ellipse cx=".4" rx="6.3" ry="9.8" fill="none" stroke="#a80f1c" stroke-width=".6"/></svg>
<!-- tray icons -->
<svg style="left:856px;top:741px" width="16" height="17" viewBox="0 0 16 17"><path d="M1 6 H4 L8.5 1.5 V15.5 L4 11 H1 Z" fill="#f4f6f8" stroke="#5a6a80" stroke-width=".6"/><path d="M10.8 5.5 C12 7 12 10 10.8 11.5 M12.8 3.8 C14.8 6.5 14.8 10.5 12.8 13.2" fill="none" stroke="#dfe6ee" stroke-width="1"/></svg>
<svg style="left:878px;top:741px" width="18" height="17" viewBox="0 0 18 17"><rect x="5" y="5" width="11.5" height="8" fill="#3f6a9a" stroke="#f0f3f6" stroke-width="1.4"/><path d="M8 15.5 H14 M11 13.5 V15.5" stroke="#f0f3f6" stroke-width="1.4"/><rect x="1" y="1" width="5" height="6" fill="#f0f3f6"/><path d="M2.5 1 V4 M4.5 1 V4 M3.5 7 V11 H5" stroke="#c8ccd2" stroke-width="1" fill="none"/></svg>
<svg style="left:900px;top:745px" width="19" height="12" viewBox="0 0 19 12"><path d="M1 5.5 L9 1 L15 3 L7 8 Z" fill="#c8ccd0"/><path d="M1 5.5 L7 8 V10 L1 7.5 Z" fill="#7a8088"/><path d="M7 8 L15 3 V5 L7 10 Z" fill="#9aa0a8"/><circle cx="14.5" cy="8" r="3.4" fill="#3fb53a" stroke="#e8f4e8" stroke-width=".6"/><path d="M12.9 8 L14.1 9.3 L16.2 6.8" fill="none" stroke="#fff" stroke-width="1"/></svg>
<svg style="left:922px;top:741px" width="18" height="17" viewBox="0 0 18 17"><rect x="1.7" y="2.5" width="8" height="13" rx="1" fill="#2a3a55" stroke="#f4f6f8" stroke-width="1.5"/><rect x="4" y="1" width="3.5" height="1.5" fill="#f4f6f8"/><rect x="3.3" y="4.5" width="4.8" height="9.5" fill="#f4f6f8"/><path d="M12 2 V5 M15 2 V5 M11 5 H16 V8 C16 9.5 15 10 13.5 10 V15" fill="none" stroke="#f4f6f8" stroke-width="1.5"/></svg>
<div class="a" style="left:1014px;top:734px;width:10px;height:34px;border-left:1px solid #5f7fa6;background:linear-gradient(180deg,rgba(200,215,235,.55),rgba(120,150,190,.25) 50%,rgba(60,90,140,.3))"></div>
<div class="t" style="left:54.5px;top:29.2px;font-size:11.5px;color:#35383c;transform:scaleX(0.948);">Plants - PV Monitoring</div>
<div class="t" style="left:272.5px;top:29.2px;font-size:11.5px;color:#35383c;transform:scaleX(0.921);">Facebook</div>
<div class="t" style="left:173.0px;top:60.3px;font-size:13.5px;color:#202124;transform:scaleX(0.966);">m.ginlong.com<span style="color:#6a6e73">/main.html</span></div>
<div class="t" style="left:48.9px;top:90.7px;font-size:11px;color:#3c4043;">Приложения</div>
<div class="t" style="left:151.5px;top:90.7px;font-size:11px;color:#3c4043;transform:scaleX(0.950);">DC 48V 1500W без...</div>
<div class="t" style="left:292.0px;top:90.7px;font-size:11px;color:#3c4043;transform:scaleX(0.944);">(14) Facebook</div>
<div class="t" style="left:397.5px;top:90.7px;font-size:11px;color:#3c4043;transform:scaleX(0.986);">Plant - PV Monitori...</div>
<div class="t" style="left:538.0px;top:90.7px;font-size:11px;color:#3c4043;transform:scaleX(0.968);">Авиабилеты</div>
<div class="t" style="left:637.0px;top:90.7px;font-size:11px;color:#3c4043;transform:scaleX(0.973);">Универсальное от...</div>
<div class="t" style="left:932.0px;top:90.7px;font-size:11px;color:#3c4043;transform:scaleX(0.985);">Другие закладки</div>
<div class="t" style="left:616.0px;top:92.2px;font-size:8.5px;color:#fff;font-weight:700;transform:scaleX(1.215);">17</div>
<div class="t" style="left:191.2px;top:116.8px;font-size:27.5px;color:#e8913a;font-weight:200;transform:scaleX(0.931);font-family:DejaVu Sans,Liberation Sans,sans-serif;-webkit-text-stroke:.6px #e8913a;">solis</div>
<div class="t" style="left:317.6px;top:124.7px;font-size:11px;color:#333;transform:scaleX(0.958);">Plants</div>
<div class="t" style="left:817.1px;top:120.3px;font-size:9.3px;color:#333;">us5nbp</div>
<div class="t" style="left:817.1px;top:133.3px;font-size:9.3px;color:#bbb;">ID:351112</div>
<div class="t" style="left:283.2px;top:158.5px;font-size:9.3px;color:#999;">Daily Product...</div>
<div class="t" style="left:352.0px;top:158.5px;font-size:9.3px;color:#999;transform:scaleX(1.032);">Monthly Pro...</div>
<div class="t" style="left:420.3px;top:158.5px;font-size:9.3px;color:#999;transform:scaleX(0.991);">Yearly Produ...</div>
<div class="t" style="left:488.9px;top:158.5px;font-size:9.3px;color:#999;transform:scaleX(1.010);">Total Prod...</div>
<div class="t" style="left:283.2px;top:177.9px;font-size:9.5px;color:#333;transform:scaleX(0.976);">0.60kWh</div>
<div class="t" style="left:352.0px;top:177.9px;font-size:9.5px;color:#333;transform:scaleX(0.963);">524.20kWh</div>
<div class="t" style="left:420.3px;top:177.9px;font-size:9.5px;color:#333;transform:scaleX(0.986);">1.41MWh</div>
<div class="t" style="left:488.9px;top:177.9px;font-size:9.5px;color:#333;transform:scaleX(0.979);">5.98MWh</div>
<div class="t" style="left:283.2px;top:225.3px;font-size:9.3px;color:#999;transform:scaleX(0.969);">Daily Revenue</div>
<div class="t" style="left:352.0px;top:225.3px;font-size:9.3px;color:#999;transform:scaleX(1.013);">Monthly Rev...</div>
<div class="t" style="left:420.3px;top:225.3px;font-size:9.3px;color:#999;transform:scaleX(0.976);">Annual Reve...</div>
<div class="t" style="left:488.9px;top:225.3px;font-size:9.3px;color:#999;transform:scaleX(1.014);">Total Yields</div>
<div class="t" style="left:283.2px;top:244.4px;font-size:9.5px;color:#333;transform:scaleX(0.965);">0.82UAH</div>
<div class="t" style="left:352.0px;top:244.4px;font-size:9.5px;color:#333;transform:scaleX(0.935);">719.2UAH</div>
<div class="t" style="left:420.3px;top:244.4px;font-size:9.5px;color:#333;transform:scaleX(0.954);">1938.22UAH</div>
<div class="t" style="left:488.9px;top:244.4px;font-size:9.5px;color:#333;transform:scaleX(0.953);">8211.42UAH</div>
<div class="t" style="left:193.8px;top:308.9px;font-size:10px;color:#666;transform:scaleX(0.969);">2020/04/19</div>
<div class="t" style="left:477.7px;top:307.9px;font-size:9.8px;color:#2d8cf0;transform:scaleX(0.877);">Day</div>
<div class="t" style="left:529.5px;top:307.9px;font-size:9.8px;color:#555;transform:scaleX(1.017);">Month</div>
<div class="t" style="left:593.3px;top:307.9px;font-size:9.8px;color:#555;transform:scaleX(0.909);">Year</div>
<div class="t" style="left:647.9px;top:307.9px;font-size:9.8px;color:#555;transform:scaleX(0.985);">Total</div>
<div class="t" style="left:368.2px;top:345.2px;font-size:9.5px;color:#333;transform:scaleX(0.988);">Daily Production: 28.8kWh</div>
<div class="t" style="left:598.5px;top:386.0px;font-size:9.6px;color:#666;transform:scaleX(0.936);">Select Paramet...</div>
<div class="t" style="left:404.8px;top:412.9px;font-size:9.8px;color:#333;font-weight:700;transform:scaleX(0.923);">Current Power</div>
<div class="t" style="left:164.5px;top:415.6px;font-size:9.3px;color:#666;transform:scaleX(0.915);">kW</div>
<div class="t" style="left:172.2px;top:648.3px;font-size:9.2px;color:#777;transform:scaleX(0.859);">0</div>
<div class="t" style="left:172.2px;top:605.2px;font-size:9.2px;color:#777;transform:scaleX(0.859);">1</div>
<div class="t" style="left:172.2px;top:562.2px;font-size:9.2px;color:#777;transform:scaleX(0.859);">2</div>
<div class="t" style="left:172.2px;top:519.2px;font-size:9.2px;color:#777;transform:scaleX(0.859);">3</div>
<div class="t" style="left:172.2px;top:476.1px;font-size:9.2px;color:#777;transform:scaleX(0.859);">4</div>
<div class="t" style="left:172.2px;top:433.0px;font-size:9.2px;color:#777;transform:scaleX(0.859);">5</div>
<div class="t" style="left:181.7px;top:659.6px;font-size:8.9px;color:#888;transform:scaleX(1.008);">00:00</div>
<div class="t" style="left:242.8px;top:659.6px;font-size:8.9px;color:#888;transform:scaleX(1.008);">03:00</div>
<div class="t" style="left:303.9px;top:659.6px;font-size:8.9px;color:#888;transform:scaleX(1.008);">06:00</div>
<div class="t" style="left:365.0px;top:659.6px;font-size:8.9px;color:#888;transform:scaleX(1.008);">09:00</div>
<div class="t" style="left:426.1px;top:659.6px;font-size:8.9px;color:#888;transform:scaleX(1.008);">12:00</div>
<div class="t" style="left:487.2px;top:659.6px;font-size:8.9px;color:#888;transform:scaleX(1.008);">15:00</div>
<div class="t" style="left:548.3px;top:659.6px;font-size:8.9px;color:#888;transform:scaleX(1.008);">18:00</div>
<div class="t" style="left:609.4px;top:659.6px;font-size:8.9px;color:#888;transform:scaleX(1.008);">21:00</div>
<div class="t" style="left:670.5px;top:659.6px;font-size:8.9px;color:#888;transform:scaleX(1.008);">24:00</div>
<div class="t" style="left:729.3px;top:194.5px;font-size:11.2px;color:#333;transform:scaleX(1.045);">Игорь Иванович</div>
<div class="t" style="left:721.9px;top:214.6px;font-size:9.2px;color:#aaa;transform:scaleX(1.025);">UkraineVinnyts'ka oblastZhmeryns'ka</div>
<div class="t" style="left:713.3px;top:227.5px;font-size:9.2px;color:#aaa;transform:scaleX(1.018);">city councilZhmerynkaKyivska Street</div>
<div class="t" style="left:713.3px;top:259.9px;font-size:9.5px;color:#999;transform:scaleX(0.977);">Plant Type</div>
<div class="t" style="left:797.7px;top:259.9px;font-size:9.5px;color:#333;transform:scaleX(0.984);">Residential Rooftop</div>
<div class="t" style="left:713.3px;top:276.8px;font-size:9.5px;color:#999;transform:scaleX(0.963);">System Type</div>
<div class="t" style="left:835.4px;top:276.8px;font-size:9.5px;color:#333;transform:scaleX(0.990);">All on Grid</div>
<div class="t" style="left:713.3px;top:293.9px;font-size:9.5px;color:#999;transform:scaleX(0.949);">Capacity</div>
<div class="t" style="left:855.7px;top:293.9px;font-size:9.5px;color:#333;transform:scaleX(0.971);">5kWp</div>
<div class="t" style="left:713.3px;top:335.3px;font-size:10.8px;color:#333;transform:scaleX(1.033);">Local Weather</div>
<div class="t" style="left:872.9px;top:363.4px;font-size:9.5px;color:#555;transform:scaleX(1.011);">--</div>
<div class="t" style="left:805.5px;top:381.5px;font-size:17.2px;color:#222;transform:scaleX(0.924);">2<span style="font-size:10px;vertical-align:6px">°</span>C</div>
<div class="t" style="left:805.5px;top:399.9px;font-size:10.5px;color:#aaa;transform:scaleX(0.972);">Clear</div>
<div class="t" style="left:739.6px;top:424.8px;font-size:8.8px;color:#aaa;transform:scaleX(1.009);">Sunrise</div>
<div class="t" style="left:739.0px;top:438.1px;font-size:13.1px;color:#333;transform:scaleX(0.955);">06:05</div>
<div class="t" style="left:824.4px;top:424.8px;font-size:8.8px;color:#aaa;transform:scaleX(1.008);">Sunset</div>
<div class="t" style="left:822.7px;top:438.1px;font-size:13.1px;color:#333;transform:scaleX(0.952);">20:06</div>
<div class="t" style="left:713.3px;top:480.8px;font-size:10.8px;color:#333;transform:scaleX(1.050);">Environmental &amp; Economic</div>
<div class="t" style="left:713.3px;top:493.1px;font-size:10.8px;color:#333;transform:scaleX(1.020);">Benefits</div>
<div class="t" style="left:738.1px;top:554.8px;font-size:13.1px;color:#666;transform:scaleX(0.946);">Tree</div>
<div class="t" style="left:830.9px;top:554.8px;font-size:13.1px;color:#666;transform:scaleX(0.966);">CO<span style="font-size:7.5px">2</span></div>
<div class="t" style="left:712.7px;top:603.9px;font-size:9px;color:#666;transform:scaleX(1.057);">Accumulative tree</div>
<div class="t" style="left:733.2px;top:616.9px;font-size:9px;color:#666;transform:scaleX(1.097);">planting</div>
<div class="t" style="left:717.6px;top:629.4px;font-size:11.4px;color:#555;font-weight:700;transform:scaleX(0.989);">16.35 tree(s)</div>
<div class="t" style="left:804.9px;top:603.9px;font-size:9px;color:#666;transform:scaleX(1.026);">Accumulative CO<span style="font-size:6px">2</span></div>
<div class="t" style="left:822.5px;top:616.9px;font-size:9px;color:#666;transform:scaleX(1.005);">emissions</div>
<div class="t" style="left:822.7px;top:629.8px;font-size:9px;color:#666;transform:scaleX(1.075);">reduction</div>
<div class="t" style="left:827.9px;top:642.3px;font-size:11.4px;color:#555;font-weight:700;transform:scaleX(1.005);">5.97 t</div>
<div class="t" style="left:713.3px;top:682.8px;font-size:10.9px;color:#333;transform:scaleX(0.978);">Devices</div>
<div class="t" style="left:718.0px;top:716.2px;font-size:9px;color:#666;transform:scaleX(1.024);">Name</div>
<div class="t" style="left:770.3px;top:716.2px;font-size:9px;color:#666;transform:scaleX(1.068);">All</div>
<div class="t" style="left:799.0px;top:716.2px;font-size:9px;color:#666;transform:scaleX(1.046);">Nor...</div>
<div class="t" style="left:827.5px;top:716.2px;font-size:9px;color:#666;transform:scaleX(1.045);">Offl...</div>
<div class="t" style="left:855.7px;top:716.2px;font-size:9px;color:#666;transform:scaleX(1.025);">Aler...</div>
<div class="t" style="left:829.0px;top:744.1px;font-size:10.2px;color:#eef2f6;transform:scaleX(0.972);">RU</div>
<div class="t" style="left:969.0px;top:738.6px;font-size:11.2px;color:#fff;transform:scaleX(0.872);">9:18</div>
<div class="t" style="left:953.0px;top:754.6px;font-size:11.2px;color:#fff;transform:scaleX(0.898);">20.04.2020</div>
</body></html>
